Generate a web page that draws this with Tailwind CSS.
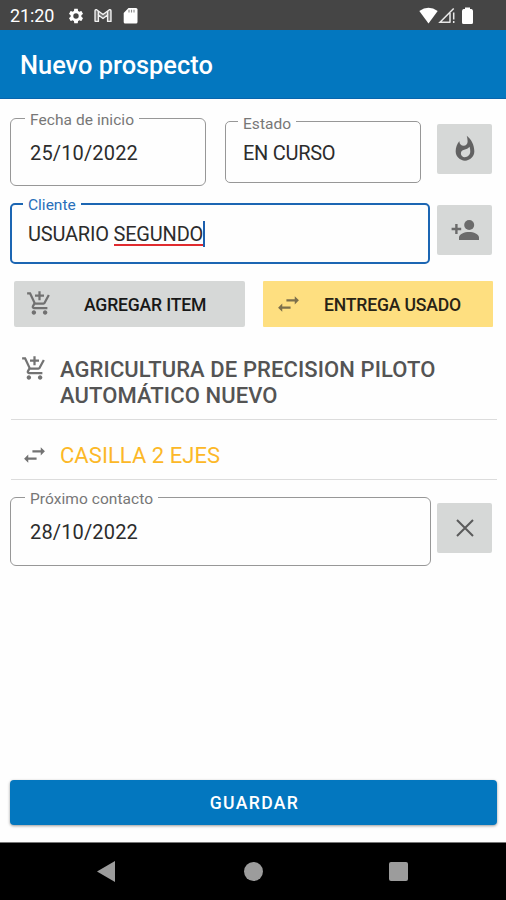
<!DOCTYPE html>
<html lang="es">
<head>
<meta charset="utf-8">
<title>Nuevo prospecto</title>
<script src="https://cdn.jsdelivr.net/npm/@tailwindcss/browser@4"></script>
</head>
<body class="bg-white">
<svg class="hidden">
  <symbol id="cart" viewBox="0 0 24 24"><path d="M11 9h2V6h3V4h-3V1h-2v3H8v2h3v3zm-4 9c-1.1 0-1.99.9-1.99 2S5.900 22 7 22s2-.9 2-2-.9-2-2-2zm10 0c-1.100 0-1.990.9-1.990 2s.89 2 1.990 2 2-.9 2-2-.9-2-2-2zm-8.900-5h7.450c.75 0 1.410-.41 1.750-1.030L21.160 4.960 19.420 4l-3.870 7H8.530L4.270 2H1v2h2l3.600 7.590-1.350 2.440C4.520 15.370 5.480 17 7 17h12v-2H7l1.100-2z"/></symbol>
  <symbol id="swap" viewBox="0 0 24 24"><path d="M22 8l-4-4v3H10v2h8v3zM2 15l4 4v-3h8v-2H6v-3z"/></symbol>
</svg>
<div class="flex h-[900px] w-[506px] flex-col overflow-hidden font-['Roboto',sans-serif]">
  <header class="flex h-[30px] shrink-0 items-center bg-[#454545] pl-[10px] pr-[33px] text-white">
    <span class="w-[57px] pt-[2px] text-[18px] leading-none tracking-[-0.1px]">21:20</span>
    <svg class="mt-px size-[18px]" viewBox="0 0 24 24" fill="currentColor"><path d="M19.140 12.940c.04-.3.06-.61.06-.94s-.02-.64-.07-.94l2.030-1.580c.18-.14.23-.41.12-.61l-1.920-3.320c-.12-.22-.37-.29-.59-.22l-2.390.96c-.5-.38-1.030-.7-1.620-.94L14.400 2.810c-.04-.24-.24-.41-.48-.41h-3.840c-.24 0-.43.17-.47.41L9.250 5.350c-.59.24-1.130.57-1.620.94l-2.390-.96c-.22-.08-.47 0-.59.22L2.740 8.870c-.12.21-.08.47.12.61l2.030 1.580c-.05.3-.09.63-.09.94s.02.64.07.94l-2.030 1.580c-.18.14-.23.41-.12.61l1.920 3.320c.12.22.37.29.59.22l2.390-.96c.5.38 1.030.7 1.620.94l.36 2.540c.05.24.24.41.48.41h3.840c.24 0 .44-.17.47-.41l.36-2.540c.59-.24 1.130-.56 1.620-.94l2.390.96c.22.08.47 0 .59-.22l1.920-3.320c.12-.22.07-.47-.12-.61l-2.010-1.580zM12 15.600A3.600 3.600 0 1 1 12 8.400a3.600 3.600 0 0 1 0 7.200z"/></svg>
    <svg class="ml-[9px] mt-px h-[15px] w-[18px]" viewBox="0 0 19 16" fill="#777" stroke="#f2f2f2" stroke-width="1.500" stroke-linejoin="round"><path d="M1 14V3.200Q1 1.500 2.700 1.800L9.500 7l6.800-5.200Q18 1.500 18 3.200V14.300h-3.600V7.500L9.500 11.200 4.600 7.500v6.800H1.600z"/><path d="M4.600 7.500V3.200M14.400 7.500V3.200"/></svg>
    <svg class="ml-[11px] mt-[2px] h-[16px] w-[15px]" viewBox="0 0 15 16"><path fill="#fff" d="M5.500 0H13q1.500 0 1.500 1.500v12.500q0 1.500-1.500 1.500H2.200Q.7 15.500.7 14V5z"/><path stroke="#888" stroke-width="1.100" d="M6 1.800v2.700M8.500 1.800v2.700M11 1.800v2.700"/></svg>
    <svg class="ml-auto h-[17px] w-[19px]" viewBox="0 0 19 17" fill="#fff"><path d="M.3 4Q9.500-2.600 18.700 4L9.500 16.600z"/></svg>
    <svg class="h-[17px] w-[17px]" viewBox="0 0 17 17" fill="none" stroke="#e8e8e8" stroke-width="1.500"><path d="M15.700 1.500L2 15.300h10.500M12 6v9.300"/><path d="M15.700 5.500v7M15.700 14v2"/></svg>
    <svg class="ml-[7px] mt-px h-[18px] w-[11px]" viewBox="0 0 11 18" fill="#fff"><path d="M3 .5h5V2h1.500Q11 2.300 11 4v11.500Q11 17 9.500 17h-8Q0 17 0 15.500V4Q0 2.300 1.500 2H3z"/></svg>
  </header>
  <h1 class="flex h-[69px] shrink-0 items-center border-b border-[#0865ad] bg-[#0377bf] pl-[20px] pt-[4px] text-[25.400px] font-medium leading-none text-white">Nuevo prospecto</h1>

  <main class="flex h-[743px] shrink-0 flex-col bg-[#fefefe] px-[10px]">
    <div class="mt-[11px] flex h-[77px] items-start">
      <fieldset class="h-[76px] w-[196px] rounded-[6px] border border-[#979797] pl-[14px]">
        <legend class="h-[17px] px-[5px] text-[15.500px] leading-[20px] tracking-[0.06px] text-[#777]">Fecha de inicio</legend>
        <div class="pl-[5px] pt-[14px] text-[20px] leading-[24px] tracking-[0.150px] text-[#2c2c2c]">25/10/2022</div>
      </fieldset>
      <fieldset class="ml-[19px] mt-[3px] h-[70px] w-[196px] rounded-[5px] border border-[#979797] pl-[12px]">
        <legend class="h-[17px] px-[5px] text-[15.500px] leading-[22px] tracking-[0.06px] text-[#777]">Estado</legend>
        <div class="pl-[5px] pt-[11px] text-[20px] leading-[24px] tracking-[-0.280px] text-[#2c2c2c]">EN CURSO</div>
      </fieldset>
      <button class="ml-[16px] mt-[14px] flex h-[50px] w-[55px] items-center justify-center rounded-[2px] bg-[#d6d8d7]">
        <svg class="size-[28px]" viewBox="0 0 24 24" fill="#626262"><path d="M13.500.67s.74 2.650.74 4.800c0 2.060-1.350 3.730-3.410 3.730-2.070 0-3.630-1.670-3.630-3.730l.03-.36C5.210 7.510 4 10.620 4 14c0 4.420 3.580 8 8 8s8-3.580 8-8C20 8.610 17.410 3.800 13.500.67zM11.710 19c-1.780 0-3.220-1.400-3.220-3.140 0-1.620 1.050-2.760 2.810-3.120 1.770-.36 3.600-1.210 4.620-2.580.39 1.290.59 2.650.59 4.040 0 2.650-2.150 4.800-4.800 4.800z"/></svg>
      </button>
    </div>
    <div class="mt-[8px] flex h-[69px] items-start">
      <fieldset class="h-[69px] w-[420px] rounded-[5px] border-2 border-[#1c66b3] pl-[11px]">
        <legend class="h-[18px] px-[5px] text-[15.500px] leading-[20px] text-[#286fba]">Cliente</legend>
        <div class="flex pl-[5px] pt-[8px] text-[20px] leading-[27px] tracking-[-0.200px] text-[#2c2c2c]"><span class="whitespace-pre">USUARIO </span><span class="h-[25px] border-b-2 border-[#e02b2f]">SEGUNDO</span><span class="h-[26px] w-[2px] bg-[#1c5fae]"></span></div>
      </fieldset>
      <button class="ml-[7px] mt-[10px] flex h-[50px] w-[55px] items-center justify-center rounded-[2px] bg-[#d6d8d7]">
        <svg class="h-[28px] w-[30px]" viewBox="0 0 30 28" fill="#6b6b6b"><circle cx="19.200" cy="9" r="5"/><path d="M9 24v-2.500C9 18 14.500 16 19 16s10 2 10 5.500V24zM5.200 8h2.400v3.800h3.600v2.400H7.600V18H5.200v-3.800H1.600v-2.400h3.600z"/></svg>
      </button>
    </div>
    <div class="ml-[4px] mt-[17px] flex h-[46px] gap-[18px]">
      <button class="flex h-[46px] w-[231px] items-center rounded-[2px] bg-[#d6d8d7] pl-[12px] text-[17.600px] font-medium tracking-[-0.180px] text-[#181818]"><svg class="mt-[-2px] size-[27px]" fill="#717171"><use href="#cart"/></svg><span class="ml-[31px] mt-[2px]">AGREGAR ITEM</span></button>
      <button class="flex h-[46px] w-[230px] items-center rounded-[1px] bg-[#fedf80] pl-[13px] text-[17.600px] font-medium tracking-[-0.180px] text-[#282315]"><svg class="size-[25px]" fill="#7d704b"><use href="#swap"/></svg><span class="ml-[23px] mt-[2px]">ENTREGA USADO</span></button>
    </div>
    <div class="ml-px flex h-[93px] w-[486px] border-b border-[#dcdcdc] pl-[10px] pt-[27px]">
      <svg class="mt-px size-[27px] shrink-0" fill="#737373"><use href="#cart"/></svg>
      <p class="ml-[12px] mt-[3px] text-[22px] font-medium leading-[26px] tracking-[0.100px] text-[#545454]">AGRICULTURA DE PRECISION PILOTO<br>AUTOMÁTICO NUEVO</p>
    </div>
    <div class="ml-px flex h-[60px] w-[486px] items-center border-b border-[#dcdcdc] pl-[11px] pt-[12px]">
      <svg class="size-[25px] shrink-0" fill="#737373"><use href="#swap"/></svg>
      <p class="ml-[13px] mt-px text-[22px] leading-[26px] tracking-[0.050px] text-[#fcb827]">CASILLA 2 EJES</p>
    </div>
    <div class="mt-[9px] flex items-start">
      <fieldset class="h-[77px] w-[421px] rounded-[6px] border border-[#979797] pl-[14px]">
        <legend class="h-[17px] px-[5px] text-[15.500px] leading-[20px] tracking-[0.060px] text-[#777]">Próximo contacto</legend>
        <div class="pl-[5px] pt-[14px] text-[20px] leading-[24px] tracking-[0.150px] text-[#2c2c2c]">28/10/2022</div>
      </fieldset>
      <button class="ml-[6px] mt-[14px] flex h-[50px] w-[55px] items-center justify-center rounded-[2px] bg-[#d6d8d7]">
        <svg class="size-[18px]" viewBox="0 0 18 18" stroke="#5b5b5b" stroke-width="2"><path d="M1 1l16 16M17 1L1 17"/></svg>
      </button>
    </div>
    <button class="mb-[17px] mt-auto h-[45px] w-[487px] rounded-[4px] bg-[#0377bf] pl-[2px] pt-[2px] text-[17.600px] font-medium tracking-[1.350px] text-white shadow-[0_1px_3px_rgba(0,0,0,0.4)]">GUARDAR</button>
  </main>
  <nav class="flex h-[58px] shrink-0 items-center border-t border-[#777] bg-black pl-[97px]">
    <svg class="h-[21px] w-[18px]" viewBox="0 0 18 21" fill="#9c9c9c"><path d="M0 10.500L18 0v21z"/></svg>
    <span class="ml-[129px] size-[19px] rounded-full bg-[#9c9c9c]"></span>
    <span class="ml-[126px] size-[19px] rounded-[2px] bg-[#9c9c9c]"></span>
  </nav>
</div>
</body>
</html>
